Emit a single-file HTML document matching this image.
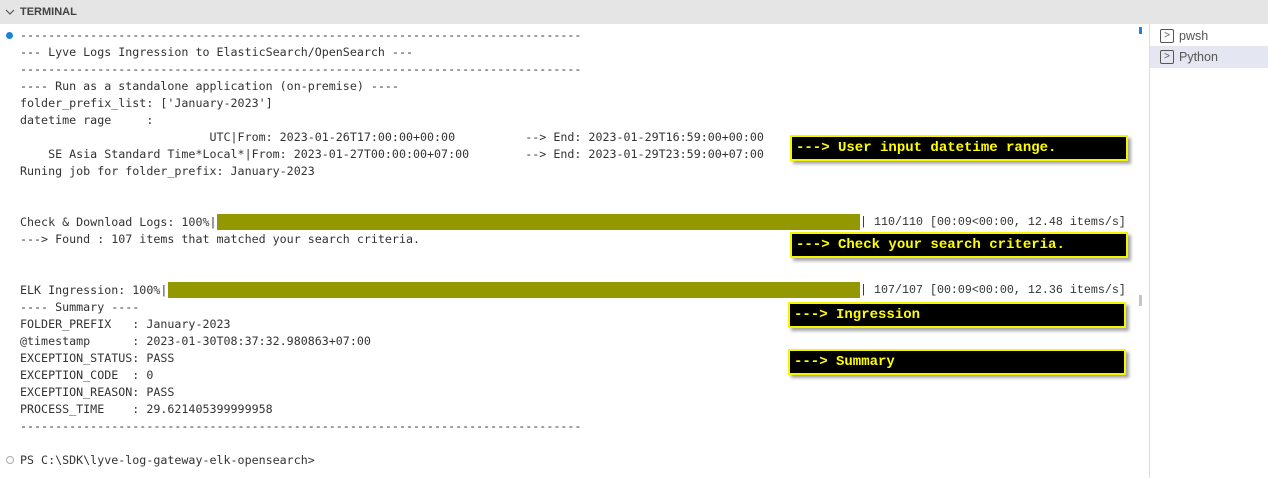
<!DOCTYPE html>
<html><head><meta charset="utf-8"><style>
body{margin:0;width:1268px;height:478px;background:#fff;overflow:hidden;position:relative;font-family:"Liberation Mono",monospace}
.hdr{position:absolute;left:0;top:0;width:1268px;height:24px;background:#e5e5e5;font:bold 11px "Liberation Sans",sans-serif;color:#424242}
.hdr span{position:absolute;left:20px;top:6px}
pre{position:absolute;left:20px;top:27px;margin:0;font-size:11.67px;line-height:17px;color:#333;white-space:pre}
.bar{position:absolute;background:#949800;height:16px}
.box{position:absolute;background:#000;border:2px solid #f5f500;box-shadow:3px 3px 3px rgba(0,0,0,.35);color:#ffff00;font:bold 14px/22px "Liberation Mono",monospace;padding-left:4px;box-sizing:border-box;height:26px}
.side{position:absolute;left:1149px;top:24px;width:1px;height:454px;background:#ddd}
.tab{position:absolute;left:1150px;width:118px;height:22px;font:12.5px/22px "Liberation Sans",sans-serif;color:#555}
.tab i{position:absolute;left:10px;top:4px;width:12px;height:12px;border:1px solid #555;border-radius:2px;font-style:normal;font-size:10px;line-height:12px;text-align:center}
.tab span{position:absolute;left:29px}
.pt{position:absolute;font-size:11.67px;line-height:17px;color:#333;white-space:pre}
</style></head><body>
<div class="hdr"><svg style="position:absolute;left:5px;top:8px" width="10" height="8"><path d="M1 2 L5 6 L9 2" fill="none" stroke="#555" stroke-width="1.2"/></svg><span>TERMINAL</span></div>
<div style="position:absolute;left:6px;top:32px;width:7px;height:7px;border-radius:50%;background:#1a85d6"></div>
<div style="position:absolute;left:6px;top:456px;width:6px;height:6px;border-radius:50%;border:1px solid #aaa"></div>
<pre>--------------------------------------------------------------------------------
--- Lyve Logs Ingression to ElasticSearch/OpenSearch ---
--------------------------------------------------------------------------------
---- Run as a standalone application (on-premise) ----
folder_prefix_list: ['January-2023']
datetime rage     :
                           UTC|From: 2023-01-26T17:00:00+00:00          --> End: 2023-01-29T16:59:00+00:00
    SE Asia Standard Time*Local*|From: 2023-01-27T00:00:00+07:00        --> End: 2023-01-29T23:59:00+07:00
Runing job for folder_prefix: January-2023


Check &amp; Download Logs: 100%|
---&gt; Found : 107 items that matched your search criteria.


ELK Ingression: 100%|
---- Summary ----
FOLDER_PREFIX   : January-2023
@timestamp      : 2023-01-30T08:37:32.980863+07:00
EXCEPTION_STATUS: PASS
EXCEPTION_CODE  : 0
EXCEPTION_REASON: PASS
PROCESS_TIME    : 29.621405399999958
--------------------------------------------------------------------------------

PS C:\SDK\lyve-log-gateway-elk-opensearch&gt;</pre>
<div class="pt" style="left:860px;top:214px">| 110/110 [00:09&lt;00:00, 12.48 items/s]</div>
<div class="pt" style="left:860px;top:282px">| 107/107 [00:09&lt;00:00, 12.36 items/s]</div>
<div class="bar" style="left:217px;top:214px;width:643px"></div>
<div class="bar" style="left:168px;top:282px;width:692px"></div>
<div class="box" style="left:790px;top:135px;width:338px">---&gt; User input datetime range.</div>
<div class="box" style="left:790px;top:232px;width:338px">---&gt; Check your search criteria.</div>
<div class="box" style="left:788px;top:302px;width:338px">---&gt; Ingression</div>
<div class="box" style="left:788px;top:349px;width:338px">---&gt; Summary</div>
<div style="position:absolute;left:1139px;top:27px;width:3px;height:7px;background:#1a85d6"></div>
<div style="position:absolute;left:1139px;top:295px;width:3px;height:11px;background:#c4c4c4"></div>
<div class="side"></div>
<div class="tab" style="top:25px"><i>&gt;</i><span>pwsh</span></div>
<div class="tab" style="top:46px;background:#e4e6f1"><i>&gt;</i><span>Python</span></div>
</body></html>
